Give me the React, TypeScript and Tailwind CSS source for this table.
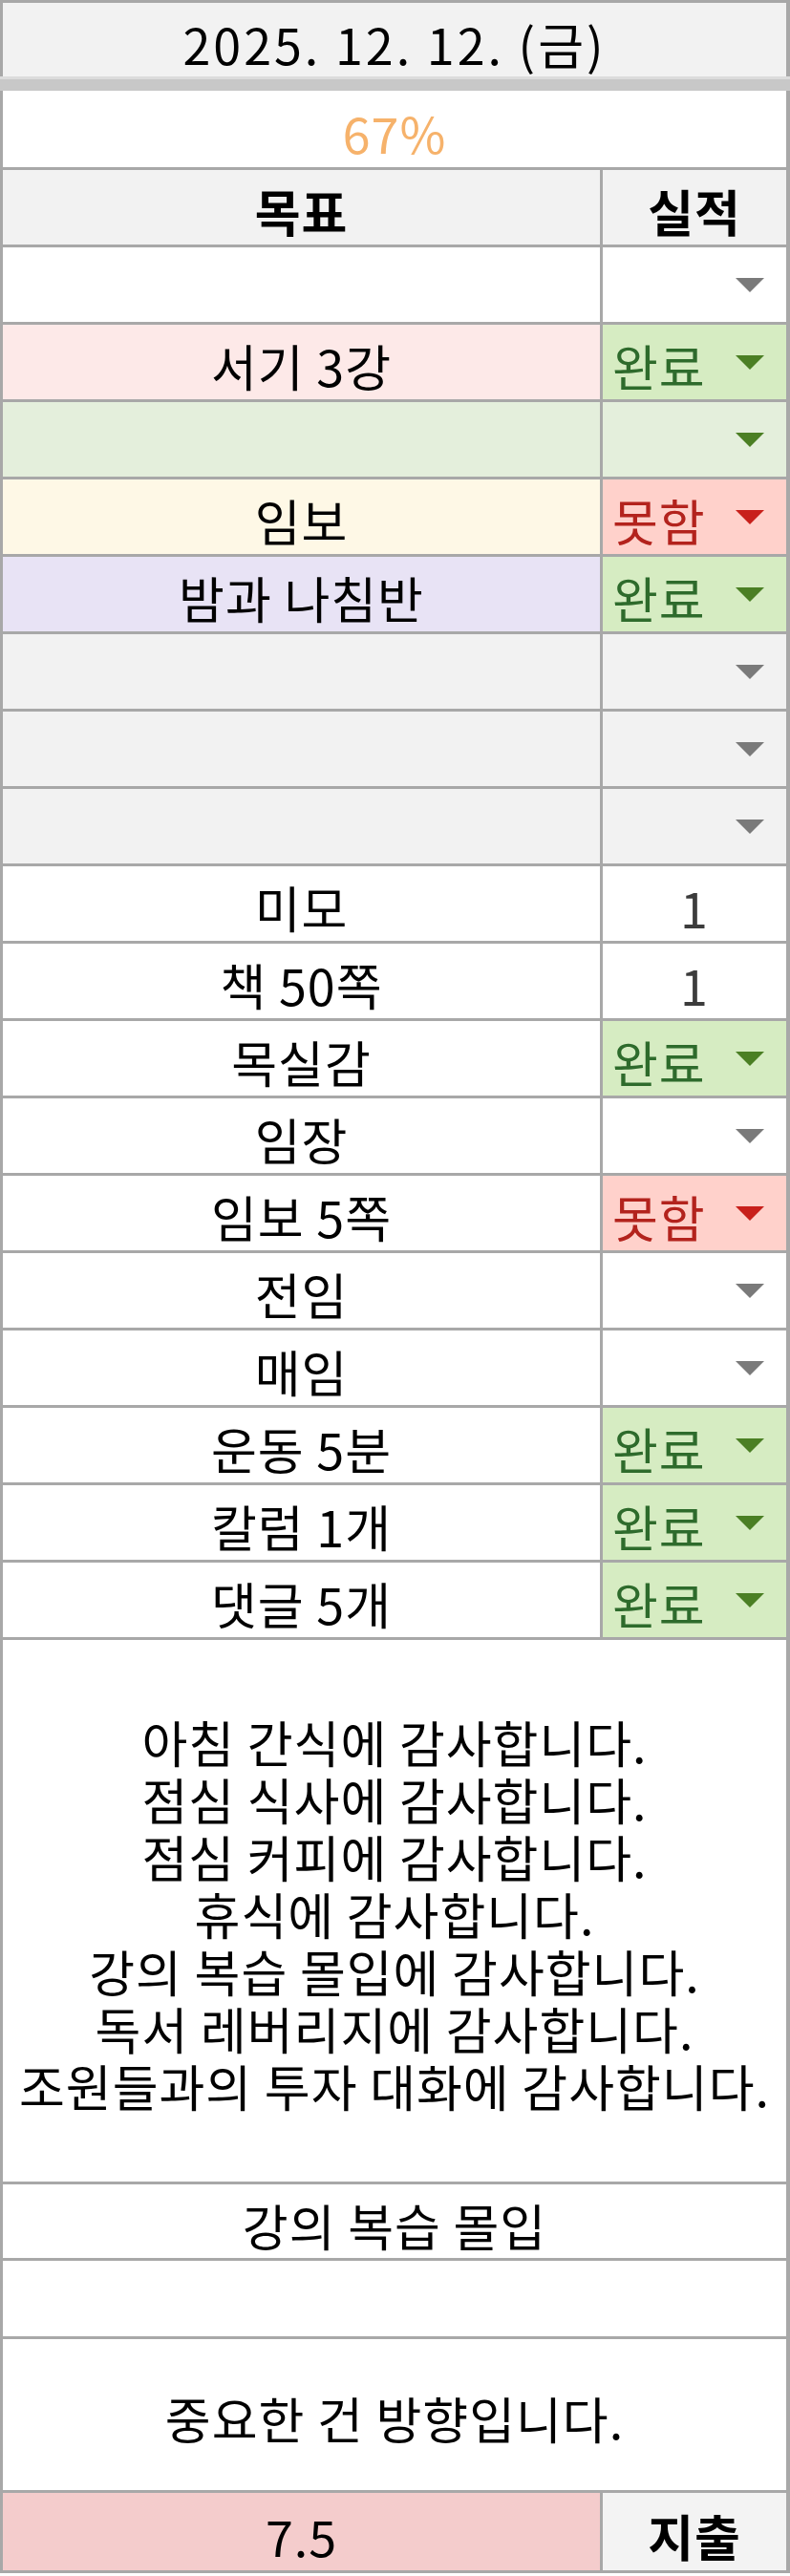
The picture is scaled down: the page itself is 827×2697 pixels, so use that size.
import React from "react";

type Status = "done" | "fail" | "empty" | "emptyGreen" | "one";

type Row = {
	label: string;
	bg: string;
	status: Status;
	rightBg?: string;
};

const rows: Row[] = [
	{ label: "", bg: "bg-white", status: "empty" },
	{ label: "서기 3강", bg: "bg-[#fde9e8]", status: "done" },
	{ label: "", bg: "bg-[#e4efdc]", status: "emptyGreen", rightBg: "bg-[#e4efdc]" },
	{ label: "임보", bg: "bg-[#fef8e6]", status: "fail" },
	{ label: "밤과 나침반", bg: "bg-[#e8e3f5]", status: "done" },
	{ label: "", bg: "bg-[#f2f2f2]", status: "empty", rightBg: "bg-[#f2f2f2]" },
	{ label: "", bg: "bg-[#f2f2f2]", status: "empty", rightBg: "bg-[#f2f2f2]" },
	{ label: "", bg: "bg-[#f2f2f2]", status: "empty", rightBg: "bg-[#f2f2f2]" },
	{ label: "미모", bg: "bg-white", status: "one" },
	{ label: "책 50쪽", bg: "bg-white", status: "one" },
	{ label: "목실감", bg: "bg-white", status: "done" },
	{ label: "임장", bg: "bg-white", status: "empty" },
	{ label: "임보 5쪽", bg: "bg-white", status: "fail" },
	{ label: "전임", bg: "bg-white", status: "empty" },
	{ label: "매임", bg: "bg-white", status: "empty" },
	{ label: "운동 5분", bg: "bg-white", status: "done" },
	{ label: "칼럼 1개", bg: "bg-white", status: "done" },
	{ label: "댓글 5개", bg: "bg-white", status: "done" },
];

const thanks = [
	"아침 간식에 감사합니다.",
	"점심 식사에 감사합니다.",
	"점심 커피에 감사합니다.",
	"휴식에 감사합니다.",
	"강의 복습 몰입에 감사합니다.",
	"독서 레버리지에 감사합니다.",
	"조원들과의 투자 대화에 감사합니다.",
];

function Arrow({ color }: { color: string }) {
	return (
		<svg width="30" height="15" viewBox="0 0 30 15" className="shrink-0">
			<polygon points="0,0 30,0 15,15" fill={color} />
		</svg>
	);
}

function StatusCell({ row }: { row: Row }) {
	if (row.status === "one") {
		return (
			<div className="flex h-[78px] flex-1 items-center justify-center bg-white pt-[8px] text-[#3c3c3c]">
				1
			</div>
		);
	}
	if (row.status === "done") {
		return (
			<div className="flex h-[78px] flex-1 items-center justify-between bg-[#d6ecc2] pl-[10px] pr-[23px] text-[#2e6b2c]">
				<span className="pt-[8px]">완료</span>
				<Arrow color="#4b7f24" />
			</div>
		);
	}
	if (row.status === "fail") {
		return (
			<div className="flex h-[78px] flex-1 items-center justify-between bg-[#ffd1cb] pl-[10px] pr-[23px] text-[#b3231d]">
				<span className="pt-[8px]">못함</span>
				<Arrow color="#c8201b" />
			</div>
		);
	}
	return (
		<div className={`flex h-[78px] flex-1 items-center justify-end pr-[23px] ${row.rightBg ?? "bg-white"}`}>
			<Arrow color={row.status === "emptyGreen" ? "#4b7f24" : "#7a7a7a"} />
		</div>
	);
}

export default function App() {
	return (
		<div
			className="w-[827px] bg-[#a8a8a8] text-[52px] leading-none tracking-[1px] text-black"
			style={{ fontFamily: "'Noto Sans CJK KR', 'Noto Sans', sans-serif" }}
		>
			<div className="flex flex-col gap-[3px] pb-[3px] pl-[3px] pr-[4px] pt-[3px]">
				{/* date */}
				<div className="flex h-[77px] items-center justify-center bg-[#f2f2f2] pt-[8px] tracking-[3px]">
					2025. 12. 12. (금)
				</div>
			</div>
			<div className="-mt-[3px] h-[3px] bg-[#dcdcdc]" />
			<div className="h-[12px] bg-[#c8c8c8]" />
			<div className="flex flex-col gap-[3px] pb-[3px] pl-[3px] pr-[4px]">
				<div className="flex h-[80px] items-center justify-center bg-white pt-[8px] text-[#f6b26b]">
					67%
				</div>
				<div className="flex h-[78px] font-bold">
					<div className="flex w-[625px] items-center justify-center bg-[#f2f2f2] pt-[8px]">목표</div>
					<div className="ml-[3px] flex flex-1 items-center justify-center bg-[#f2f2f2] pt-[8px]">실적</div>
				</div>
				{rows.map((row, i) => (
					<div key={i} className="flex h-[78px]">
						<div className={`flex w-[625px] items-center justify-center pt-[8px] ${row.bg}`}>{row.label}</div>
						<div className="ml-[3px] flex flex-1">
							<StatusCell row={row} />
						</div>
					</div>
				))}
				<div className="flex h-[567px] flex-col items-center justify-center bg-white pt-[6px] leading-[60px]">
					{thanks.map((t) => (
						<div key={t}>{t}</div>
					))}
				</div>
				<div className="flex h-[77px] items-center justify-center bg-white pt-[8px]">강의 복습 몰입</div>
				<div className="h-[79px] bg-white" />
				<div className="flex h-[158px] items-center justify-center bg-white pt-[8px]">중요한 건 방향입니다.</div>
				<div className="flex h-[81px]">
					<div className="flex w-[625px] items-center justify-center bg-[#f4cccc] pt-[8px]">7.5</div>
					<div className="ml-[3px] flex flex-1 items-center justify-center bg-[#f3f3f3] pt-[8px] font-bold">지출</div>
				</div>
			</div>
		</div>
	);
}
